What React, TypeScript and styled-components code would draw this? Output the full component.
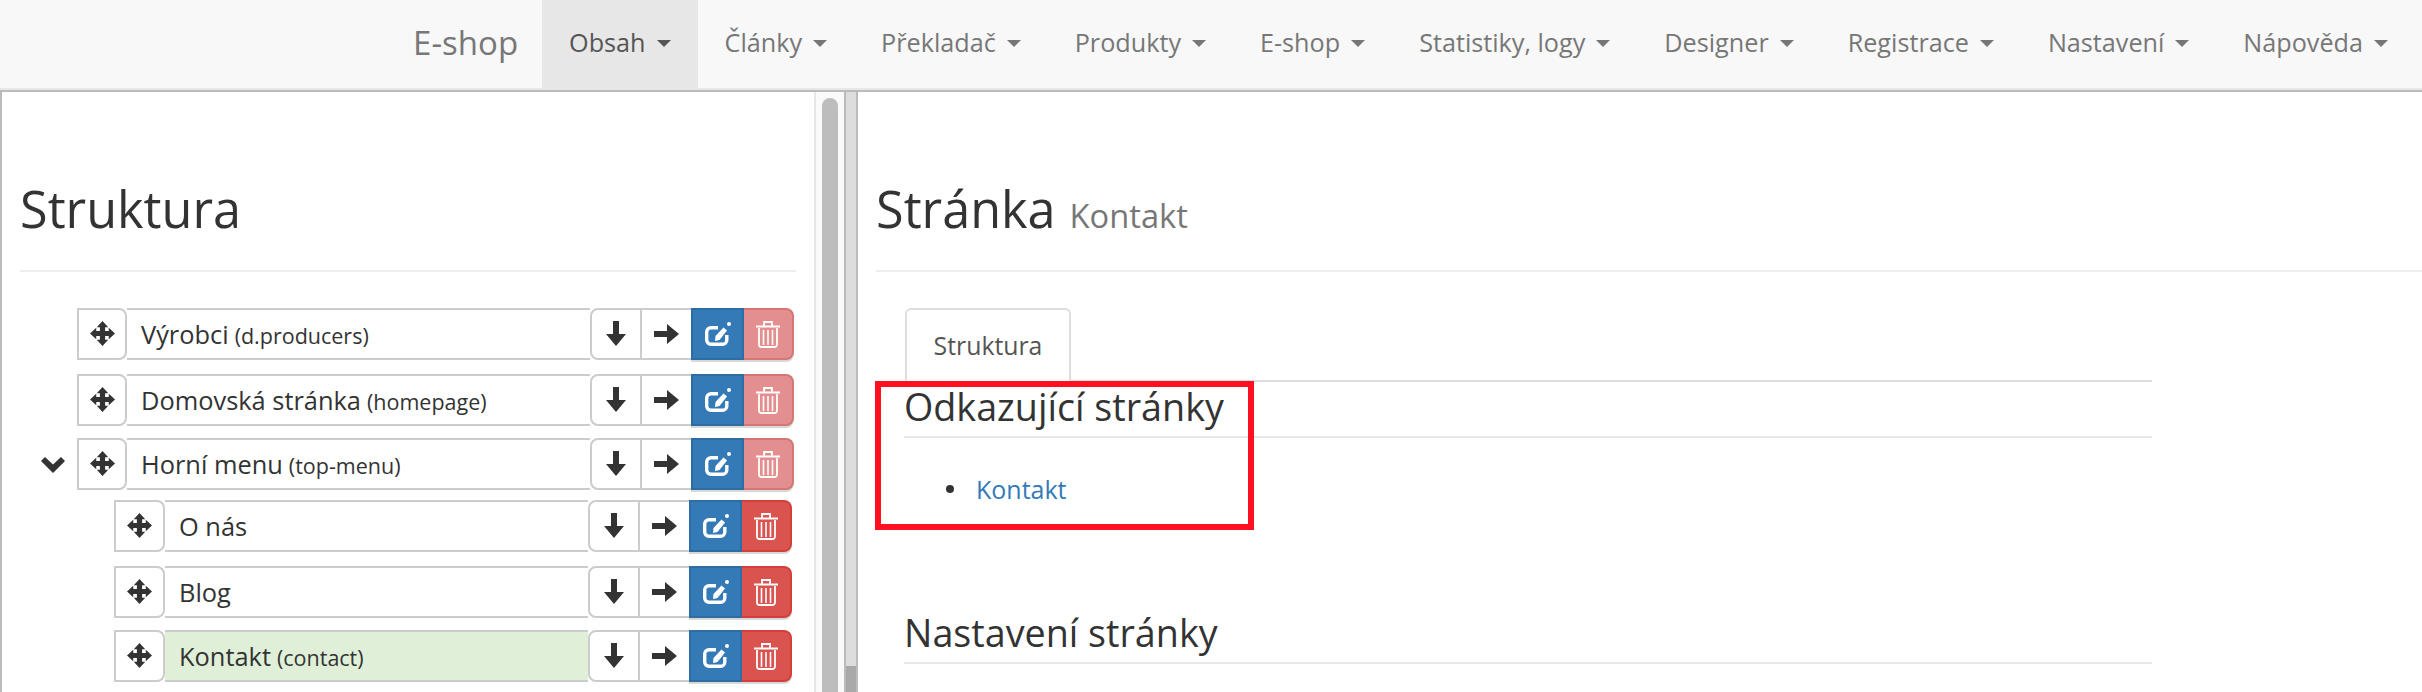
import React from "react";
import styled, { createGlobalStyle } from "styled-components";

const Global = createGlobalStyle`
  html, body { margin: 0; padding: 0; background: #fff; height: 100%; overflow: hidden; }
  body { font-family: "Open Sans", "Liberation Sans", sans-serif; color: #333; }
  * { box-sizing: border-box; }
`;

const Page = styled.div`
  width: 2422px;
  height: 692px;
  display: flex;
  flex-direction: column;
  overflow: hidden;
`;

const NavBar = styled.nav`
  height: 90px;
  flex: none;
  display: flex;
  justify-content: flex-end;
  align-items: stretch;
  padding-right: 7px;
  background: #f8f8f8;
  border-bottom: 2px solid #e7e7e7;
`;

const Brand = styled.span`
  display: flex;
  align-items: center;
  padding: 0 24px 4px 0;
  font-size: 33px;
  color: #777;
`;

const NavItem = styled.a<{ $active?: boolean }>`
  display: flex;
  align-items: center;
  gap: 11px;
  padding: 0 27px 4px;
  font-size: 25.2px;
  color: ${(p) => (p.$active ? "#555" : "#777")};
  background: ${(p) => (p.$active ? "#e7e7e7" : "transparent")};
`;

const Caret = styled.i`
  width: 0;
  height: 0;
  margin-top: 2px;
  border-top: 7px solid currentColor;
  border-left: 7px solid transparent;
  border-right: 7px solid transparent;
`;

const Split = styled.div`
  flex: 1;
  display: flex;
  min-height: 0;
  border-top: 2px solid #bbb;
`;

const LeftPane = styled.aside`
  width: 816px;
  flex: none;
  padding: 0 18px 0 18px;
  border-left: 2px solid #bbb;
  border-right: 2px solid #e8e8e8;
`;

const Gutter = styled.div`
  width: 42px;
  flex: none;
  display: flex;
  background: #fafafa;
  padding-left: 6px;
`;

const ScrollThumb = styled.div`
  width: 16px;
  margin-top: 6px;
  background: #bdbdbd;
  border-radius: 8px 8px 0 0;
`;

const SashTrack = styled.div`
  width: 14px;
  margin-left: 6px;
  background: linear-gradient(#ddd 574px, #a9a9a9 574px);
  border-left: 2px solid #bbb;
  border-right: 2px solid #bbb;
`;

const RightPane = styled.main`
  flex: 1;
  position: relative;
  padding-left: 18px;
`;

const PageHeading = styled.h1`
  margin: 0;
  height: 180px;
  padding-top: 82px;
  font-size: 50.4px;
  line-height: 70px;
  font-weight: 400;
  color: #333;
  border-bottom: 2px solid #eee;
`;

const HeadingNote = styled.small`
  font-size: 32.700px;
  color: #777;
  margin-left: 14px;
`;

const Tree = styled.div`
  padding: 36px 2px 0 0;
`;

const RowLine = styled.div<{ $gap: number; $nested?: boolean }>`
  display: flex;
  align-items: stretch;
  height: 52px;
  margin-top: ${(p) => p.$gap}px;
  margin-right: ${(p) => (p.$nested ? 2 : 0)}px;
`;

const Toggle = styled.div<{ $nested?: boolean }>`
  width: ${(p) => (p.$nested ? 94 : 57)}px;
  flex: none;
  display: flex;
  align-items: center;
  justify-content: flex-end;
  padding-right: 12px;
  color: #333;
`;

const Handle = styled.div<{ $nested?: boolean }>`
  width: ${(p) => (p.$nested ? 51 : 50)}px;
  flex: none;
  display: flex;
  align-items: center;
  justify-content: center;
  padding-bottom: 2px;
  background: #fff;
  border: 2px solid #ccc;
  border-radius: 0 8px 8px 0;
  color: #333;
`;

const Label = styled.div<{ $current?: boolean }>`
  flex: 1;
  min-width: 0;
  display: flex;
  align-items: center;
  gap: 6px;
  padding-left: 14px;
  font-size: 25.4px;
  color: #333;
  background: ${(p) => (p.$current ? "#e0f0d8" : "#fff")};
  border-top: 2px solid #ccc;
  border-bottom: 2px solid #ccc;
  white-space: nowrap;
`;

const LabelCode = styled.span`
  font-size: 21.5px;
  padding-top: 3px;
`;

const MoveButton = styled.div<{ $first?: boolean }>`
  width: ${(p) => (p.$first ? 52 : 49)}px;
  flex: none;
  display: flex;
  align-items: center;
  justify-content: center;
  background: #fff;
  color: #333;
  border: 2px solid #ccc;
  border-right: ${(p) => (p.$first ? "2px solid #ccc" : "0")};
  border-left: ${(p) => (p.$first ? "2px solid #ccc" : "0")};
  border-radius: ${(p) => (p.$first ? "8px 0 0 8px" : "0")};
`;

const EditButton = styled.div`
  width: 53px;
  flex: none;
  display: flex;
  align-items: center;
  justify-content: center;
  background: #337ab7;
  border: 2px solid #2e6da4;
  color: #fff;
  box-shadow: 0 2px 0 #d8d8d8;
`;

const DeleteButton = styled.div<{ $disabled?: boolean }>`
  width: 50px;
  flex: none;
  display: flex;
  align-items: center;
  justify-content: center;
  color: #fff;
  background: ${(p) => (p.$disabled ? "#e48f8f" : "#d9534f")};
  border: 2px solid ${(p) => (p.$disabled ? "#d67674" : "#d43f3a")};
  border-left-width: 0;
  border-radius: 0 8px 8px 0;
  box-shadow: 0 2px 0 #d8d8d8;
`;

const Tabs = styled.div`
  margin: 36px 0 0 29px;
  width: 1247px;
  height: 74px;
  border-bottom: 2px solid #ddd;
  display: flex;
`;

const Tab = styled.div`
  width: 166px;
  height: 74px;
  padding-top: 19px;
  font-size: 24.8px;
  line-height: 32px;
  text-align: center;
  color: #555;
  background: #fff;
  border: 2px solid #ddd;
  border-bottom-color: #fff;
  border-radius: 6px 6px 0 0;
`;

const Section = styled.section<{ $top: number }>`
  margin: ${(p) => p.$top}px 0 0 28px;
  width: 1248px;
`;

const SectionTitle = styled.h3`
  margin: 0;
  height: 56px;
  display: flex;
  align-items: flex-end;
  padding-bottom: 4px;
  font-size: 37.7px;
  line-height: 50px;
  font-weight: 400;
  color: #333;
  border-bottom: 2px solid #e7e7e7;
`;

const LinkList = styled.ul`
  margin: 35px 0 0;
  padding: 0 0 0 42px;
  list-style: none;
  font-size: 25px;
  line-height: 32px;
`;

const LinkItem = styled.li`
  display: flex;
  align-items: center;
  gap: 22px;
  &::before {
    content: "";
    width: 8px;
    height: 8px;
    border-radius: 50%;
    background: #333;
  }
`;

const PageLink = styled.a`
  color: #337ab7;
`;

const Highlight = styled.div`
  position: absolute;
  left: 17px;
  top: 289px;
  width: 379px;
  height: 149px;
  border: 6px solid #ff1021;
  pointer-events: none;
`;

const MoveIcon = () => (
  <svg width="25" height="25" viewBox="0 0 24 24" fill="currentColor">
    <path d="M12 0l5.500 6H14.500v3.500H18V6.500l6 5.500-6 5.500v-3h-3.500V18h3L12 24l-5.500-6h3v-3.500H6v3L0 12l6-5.500v3h3.500V6h-3z" />
  </svg>
);

const ArrowDownIcon = () => (
  <svg width="20" height="26" viewBox="0 0 20 26" fill="currentColor">
    <path d="M7 0h6v13h7L10 25 0 13h7z" />
  </svg>
);

const ArrowRightIcon = () => (
  <svg width="26" height="20" viewBox="0 0 26 20" fill="currentColor">
    <path d="M0 7h13V0l12 10-12 10v-7H0z" />
  </svg>
);

const EditIcon = () => (
  <svg width="26" height="24" viewBox="0 0 26 24" fill="none">
    <path d="M13 5.700H6a4.300 4.300 0 0 0-4.300 4.300v8a4.300 4.300 0 0 0 4.300 4.300h11.500a4.300 4.300 0 0 0 4.300-4.300V13" stroke="currentColor" strokeWidth="3.400" />
    <path d="M10 19l.5-5L18.500 5.500 22 8.500l-7.500 9.500z" fill="currentColor" />
    <circle cx="24" cy="2" r="2" fill="currentColor" />
  </svg>
);

const TrashIcon = () => (
  <svg width="24" height="28" viewBox="0 0 24 28" fill="none" stroke="currentColor">
    <path d="M0 6.500h24" strokeWidth="2" />
    <path d="M8 6V2h8v4" strokeWidth="1.800" />
    <path d="M3 8v16.500A2.500 2.500 0 0 0 5.500 27h13a2.500 2.500 0 0 0 2.500-2.500V8" strokeWidth="1.800" />
    <path d="M7.500 10v15M12 10v15M16.500 10v15" strokeWidth="1.600" />
  </svg>
);

const ChevronIcon = () => (
  <svg width="24" height="17" viewBox="0 0 24 17" fill="currentColor">
    <path d="M0 5l4-4 8 7.500L20 1l4 4-12 12z" />
  </svg>
);

type Item = {
  name: string;
  code?: string;
  gap: number;
  nested?: boolean;
  locked?: boolean;
  open?: boolean;
  current?: boolean;
};

const items: Item[] = [
  { name: "Výrobci", code: "(d.producers)", gap: 0, locked: true },
  { name: "Domovská stránka", code: "(homepage)", gap: 14, locked: true },
  { name: "Horní menu", code: "(top-menu)", gap: 12, locked: true, open: true },
  { name: "O nás", gap: 10, nested: true },
  { name: "Blog", gap: 14, nested: true },
  { name: "Kontakt", code: "(contact)", gap: 12, nested: true, current: true },
];

const menu = ["Obsah", "Články", "Překladač", "Produkty", "E-shop", "Statistiky, logy", "Designer", "Registrace", "Nastavení", "Nápověda"];

export default function App() {
  return (
    <Page>
      <Global />
      <NavBar>
        <Brand>E-shop</Brand>
        {menu.map((m, i) => (
          <NavItem key={m} $active={i === 0}>
            {m}
            <Caret />
          </NavItem>
        ))}
      </NavBar>
      <Split>
        <LeftPane>
          <PageHeading>Struktura</PageHeading>
          <Tree>
            {items.map((it) => (
              <RowLine key={it.name} $gap={it.gap} $nested={it.nested}>
                <Toggle $nested={it.nested}>{it.open && <ChevronIcon />}</Toggle>
                <Handle $nested={it.nested}>
                  <MoveIcon />
                </Handle>
                <Label $current={it.current}>
                  {it.name}
                  {it.code && <LabelCode>{it.code}</LabelCode>}
                </Label>
                <MoveButton $first>
                  <ArrowDownIcon />
                </MoveButton>
                <MoveButton>
                  <ArrowRightIcon />
                </MoveButton>
                <EditButton>
                  <EditIcon />
                </EditButton>
                <DeleteButton $disabled={it.locked}>
                  <TrashIcon />
                </DeleteButton>
              </RowLine>
            ))}
          </Tree>
        </LeftPane>
        <Gutter>
          <ScrollThumb />
          <SashTrack />
        </Gutter>
        <RightPane>
          <PageHeading>
            Stránka<HeadingNote>Kontakt</HeadingNote>
          </PageHeading>
          <Tabs>
            <Tab>Struktura</Tab>
          </Tabs>
          <Section $top={0}>
            <SectionTitle>Odkazující stránky</SectionTitle>
            <LinkList>
              <LinkItem>
                <PageLink>Kontakt</PageLink>
              </LinkItem>
            </LinkList>
          </Section>
          <Section $top={103}>
            <SectionTitle>Nastavení stránky</SectionTitle>
          </Section>
          <Highlight />
        </RightPane>
      </Split>
    </Page>
  );
}
